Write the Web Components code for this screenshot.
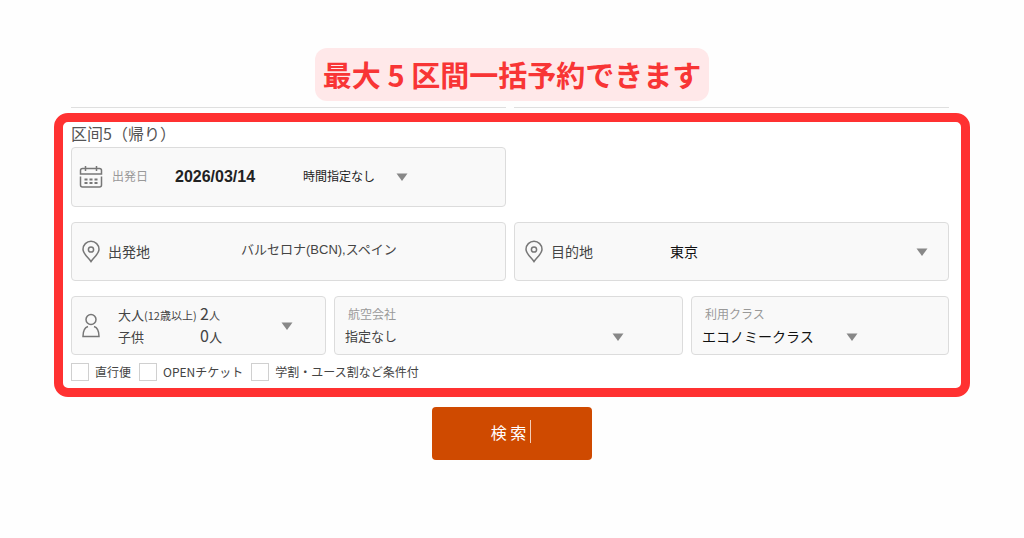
<!DOCTYPE html>
<html lang="ja">
<head>
<meta charset="utf-8">
<meta name="viewport" content="width=device-width, initial-scale=1">
<title>航空券検索</title>
<style>
body{
    margin: 0;
    background: #fefefe;
    color: #444;
    font-family: "Liberation Sans", "Noto Sans CJK JP", sans-serif;
    font-size: 13px;
}
</style>
</head>
<body>
<flight-search></flight-search>

<script>
const ICONS = {
    calendar: `
<path d="M0.500 8V4.500Q0.500 2.500 2.500 2.500H19.500Q21.500 2.500 21.500 4.500V8Z"/>
<path d="M0.500 10.500V19Q0.500 21 2.500 21H19.500Q21.500 21 21.500 19V10.500"/>
<path d="M5.500 0V5M16.500 0V5"/>
<path d="M4.500 13.500H17.500M4.500 17H17.500" stroke-width="2" stroke-dasharray="3 2"/>`,
    pin: `
<path d="M11 20.500C8.500 16.500 3 13 3 8.300A8 8 0 0 1 19 8.300C19 13 13.500 16.500 11 20.500Z"/>
<circle cx="11" cy="8.500" r="2.600"/>`,
    person: `
<circle cx="11" cy="4.500" r="5"/>
<path d="M8 11.500C4.800 12.500 3 16 3 21.500H19C19 16 17.200 12.500 14 11.500"/>`
};

const ARROW = '<svg class=arrow width=12 height=8 viewBox="0 0 12 8" aria-hidden=true><path d="M0.500 0.500H11.500L6 8Z" fill="#888"/></svg>';

class Note_Banner extends HTMLElement{
    constructor(){
        super();
        this.attachShadow({mode: 'open'}).innerHTML = `
<style>
:host{
    display: block;
    padding: 6px 8px;
    border-radius: 12px;
    background: #ffe8e9;
    color: #f83535;
    font: bold 29px/41px "Noto Sans CJK JP", sans-serif;
    white-space: nowrap;
}
</style>
<slot></slot>
`;
    }
}

class Red_Frame extends HTMLElement{
    constructor(){
        super();
        this.attachShadow({mode: 'open'}).innerHTML = `
<style>
:host{
    display: block;
    border: 9px solid #ff3131;
    border-radius: 14px;
    padding: 0 12px 7px 8px;
    background: #fff;
}
</style>
<slot></slot>
`;
    }
}

// bordered box, --columns sets the grid of what is slotted in
class Field_Card extends HTMLElement{
    constructor(){
        super();
        this.attachShadow({mode: 'open'}).innerHTML = `
<style>
:host{
    display: grid;
    grid-template-columns: var(--columns, 1fr);
    align-items: center;
    box-sizing: border-box;
    min-height: var(--card-height, 59px);
    min-width: 0;
    padding: 0 20px 0 8px;
    border: 1px solid #dcdcdc;
    border-radius: 4px;
    background: #f9f9f9;
}
</style>
<slot></slot>
`;
    }
}

class Line_Icon extends HTMLElement{
    constructor(){
        super();
        this.attachShadow({mode: 'open'});
    }

    connectedCallback(){
        this.shadowRoot.innerHTML = `
<style>
:host{
    display: block;
    height: 22px;
}
svg{
    display: block;
    overflow: visible;
}
</style>
<svg width=22 height=22 viewBox="0 0 22 22" fill=none stroke="#777" stroke-width=1.500 aria-hidden=true>${ICONS[this.getAttribute('name')]}</svg>
`;
    }
}

// label and its control; an options attribute makes it a select
class Form_Field extends HTMLElement{
    constructor(){
        super();
        this.attachShadow({mode: 'open'});
    }

    connectedCallback(){
        const label = this.getAttribute('label');
        const options = this.getAttribute('options');
        const value = this.getAttribute('value');

        this.shadowRoot.innerHTML = `
<style>
:host{
    display: grid;
    grid-template-columns: var(--label-width, auto) 1fr;
    align-items: center;
    min-width: 0;
}
:host([stacked]){
    grid-template-columns: 1fr;
    padding-left: 2px;
}
:host([stacked]) label{
    padding-left: 3px;
}
:host([nolabel]){
    grid-template-columns: 1fr;
}
label{
    color: var(--label-color, #444);
    font-size: var(--label-size, 14px);
    line-height: 22px;
}
.select{
    display: grid;
    grid-template-columns: 1fr;
    align-items: center;
    width: var(--control-width, 100%);
}
.select > *{
    grid-area: 1 / 1;
}
.arrow{
    justify-self: end;
    pointer-events: none;
}
select, input{
    appearance: none;
    box-sizing: border-box;
    width: 100%;
    height: var(--control-height, 22px);
    margin: 0;
    padding: 0;
    border: 0;
    background: none;
    color: var(--value-color, #444);
    font-family: inherit;
    font-size: var(--value-size, 13px);
    font-weight: var(--value-weight, normal);
}
input{
    align-self: var(--control-align, center);
}
</style>
${this.hasAttribute('nolabel') ? '' : `<label for=control>${label}</label>`}
${options
    ? `<div class=select><select id=control aria-label="${label}">${options.split('|').map(o => `<option>${o}</option>`).join('')}</select>${ARROW}</div>`
    : `<input id=control type=text value="${value}">`}
`;
    }
}

class Passenger_Picker extends HTMLElement{
    constructor(){
        super();
        this.attachShadow({mode: 'open'}).innerHTML = `
<style>
:host{
    display: block;
}
button{
    display: grid;
    grid-template-columns: 1fr auto;
    align-items: center;
    width: 175px;
    padding: 0;
    border: 0;
    background: none;
    color: #444;
    font: 13px/22px "Noto Sans CJK JP", sans-serif;
    text-align: left;
    cursor: pointer;
}
.counts{
    display: grid;
    grid-template-columns: 82px auto;
    grid-auto-rows: 22px;
    white-space: nowrap;
}
small{
    font-size: 11px;
    line-height: 1;
}
b{
    font-size: 16px;
    font-weight: normal;
    line-height: 1;
}
</style>
<button type=button aria-label="人数">
    <span class=counts>
        <span>大人<small>(12歳以上)</small></span><span><b>2</b><small>人</small></span>
        <span>子供</span><span><b>0</b>人</span>
    </span>
    ${ARROW}
</button>
`;
    }
}

class Check_Option extends HTMLElement{
    constructor(){
        super();
        this.attachShadow({mode: 'open'}).innerHTML = `
<style>
:host{
    display: block;
}
label{
    display: flex;
    align-items: center;
    gap: 6px;
    font: 12px/18px "Noto Sans CJK JP", sans-serif;
    white-space: nowrap;
}
input{
    appearance: none;
    width: 18px;
    height: 18px;
    margin: 0;
    border: 1px solid #d0d0d0;
    background: #fff;
}
input:checked{
    background: #cf4a00;
}
</style>
<label><input type=checkbox><span><slot></slot></span></label>
`;
    }
}

class Search_Button extends HTMLElement{
    constructor(){
        super();
        this.attachShadow({mode: 'open'}).innerHTML = `
<style>
:host{
    display: block;
}
button{
    display: flex;
    align-items: center;
    justify-content: center;
    gap: 4px;
    width: 160px;
    height: 53px;
    padding: 0 2px 4px 0;
    border: 0;
    border-radius: 4px;
    background: #cf4a00;
    color: #fff;
    font: 16px/24px "Noto Sans CJK JP", sans-serif;
    cursor: pointer;
}
.bar{
    width: 1px;
    height: 23px;
    background: #f3cdb8;
}
</style>
<button type=submit><span><slot></slot></span><span class=bar></span></button>
`;
    }
}

class Flight_Search extends HTMLElement{
    constructor(){
        super();
        this.attachShadow({mode: 'open'}).innerHTML = `
<style>
:host{
    display: block;
    padding: 48px 54px 0;
}
form{
    display: flex;
    flex-direction: column;
    align-items: center;
}
.previous, red-frame{
    align-self: stretch;
}
/* bottom edge of the segment above */
.previous{
    padding: 6px 21px 5px 17px;
}
.previous i{
    border-top: 1px solid #dfdfdf;
}
.row{
    display: grid;
    grid-template-columns: 1fr 1fr;
    gap: 8px;
}
.row.details{
    grid-template-columns: 255fr 349fr 258fr;
}
h2{
    margin: 0 0 3px;
    color: #555;
    font: 16px/22px "Noto Sans CJK JP", sans-serif;
}
.rows{
    display: grid;
    gap: 15px;
}
.date{
    --columns: 32px 191px auto;
    --card-height: 60px;
}
.date form-field{
    --label-width: 63px;
    --label-color: #999;
    --label-size: 12px;
    --value-color: #222;
    --value-size: 16px;
    --value-weight: bold;
}
.date form-field[nolabel]{
    --value-size: 12px;
    --value-weight: normal;
    --control-width: 105px;
    --control-height: 24px;
}
.place{
    --columns: 28px 1fr;
}
.from{
    --label-width: 133px;
    --control-height: 16px;
    --control-align: start;
}
.to{
    --label-width: 119px;
    --value-color: #111;
    --value-size: 14px;
}
.people{
    --columns: 38px auto;
}
.airline, .class{
    --label-color: #999;
    --label-size: 12px;
    --control-width: 279px;
}
.class{
    --control-width: 156px;
    --value-color: #111;
    --value-size: 14px;
}
.checks{
    display: flex;
    gap: 8px;
    margin-top: 8px;
}
search-button{
    margin-top: 10px;
}
</style>
<form onsubmit="return false">
    <note-banner>最大 5 区間一括予約できます</note-banner>
    <div class="row previous"><i></i><i></i></div>
    <red-frame>
        <h2>区间5（帰り）</h2>
        <div class=rows>
            <div class=row>
                <field-card class=date>
                    <line-icon name=calendar></line-icon>
                    <form-field label="出発日" value="2026/03/14"></form-field>
                    <form-field nolabel label="時間" options="時間指定なし"></form-field>
                </field-card>
            </div>
            <div class=row>
                <field-card class="place from">
                    <line-icon name=pin></line-icon>
                    <form-field label="出発地" value="バルセロナ(BCN),スペイン"></form-field>
                </field-card>
                <field-card class="place to">
                    <line-icon name=pin></line-icon>
                    <form-field label="目的地" options="東京"></form-field>
                </field-card>
            </div>
            <div class="row details">
                <field-card class=people>
                    <line-icon name=person></line-icon>
                    <passenger-picker></passenger-picker>
                </field-card>
                <field-card class=airline>
                    <form-field stacked label="航空会社" options="指定なし"></form-field>
                </field-card>
                <field-card class=class>
                    <form-field stacked label="利用クラス" options="エコノミークラス"></form-field>
                </field-card>
            </div>
        </div>
        <div class=checks>
            <check-option>直行便</check-option>
            <check-option>OPENチケット</check-option>
            <check-option>学割・ユース割など条件付</check-option>
        </div>
    </red-frame>
    <search-button>検 索</search-button>
</form>
`;
    }
}

customElements.define('note-banner', Note_Banner);
customElements.define('red-frame', Red_Frame);
customElements.define('field-card', Field_Card);
customElements.define('line-icon', Line_Icon);
customElements.define('form-field', Form_Field);
customElements.define('passenger-picker', Passenger_Picker);
customElements.define('check-option', Check_Option);
customElements.define('search-button', Search_Button);
customElements.define('flight-search', Flight_Search);
</script>
</body>
</html>
